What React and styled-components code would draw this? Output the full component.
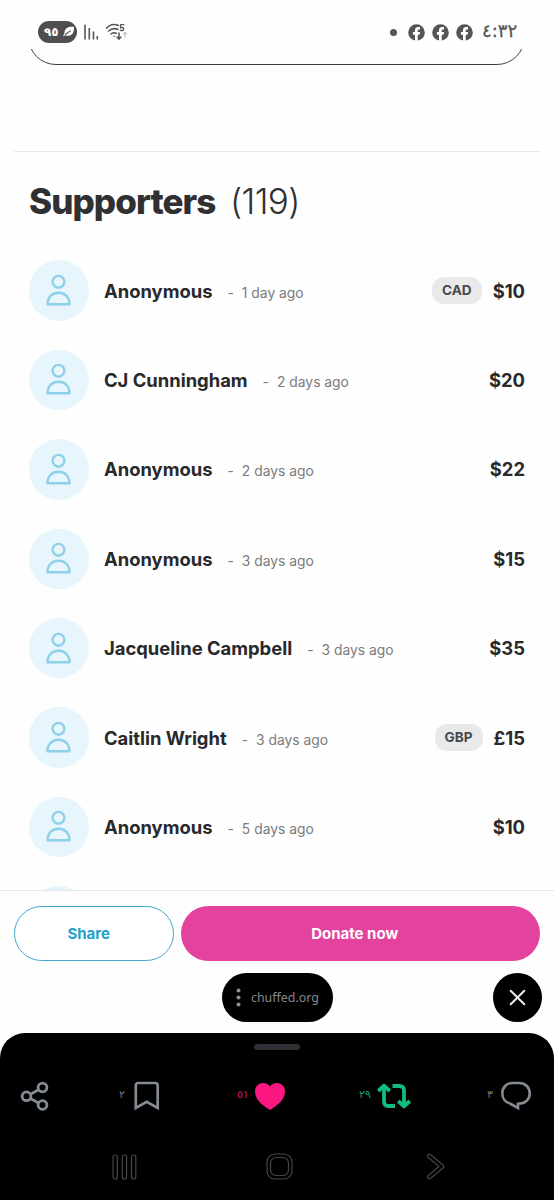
import React from "react";
import styled, { createGlobalStyle } from "styled-components";

const GlobalStyle = createGlobalStyle`
  * { box-sizing: border-box; }
  body {
    margin: 0;
    background: #fefefe;
    font-family: Inter, "Noto Sans", "DejaVu Sans", sans-serif;
    color: #2c2c2e;
  }
  svg { display: block; flex: none; }
`;

const Screen = styled.div`
  width: 554px;
  height: 1200px;
  display: flex;
  flex-direction: column;
  overflow: hidden;
`;

const StatusBar = styled.header`
  height: 49px;
  padding: 15px 37px 0 38px;
  display: flex;
  justify-content: space-between;
  align-items: center;
  flex: none;
`;

const StatusGroup = styled.div`
  display: flex;
  align-items: center;
  gap: ${(p) => p.$gap}px;
`;

const Battery = styled.div`
  width: 39px;
  height: 22px;
  border-radius: 11px;
  background: #4e4e4e;
  color: #fff;
  display: flex;
  align-items: center;
  justify-content: space-between;
  padding: 0 2px 0 6px;
  font: 700 12px/22px "DejaVu Sans", sans-serif;
`;

const Clock = styled.span`
  font: 400 18px/24px "DejaVu Sans", sans-serif;
  color: #555;
  margin-left: 2px;
  width: 35px;
  white-space: nowrap;
  padding-bottom: 3px;
  -webkit-text-stroke: 0.3px #555;
`;

const OutlineClip = styled.div`
  height: 16px;
  margin: 0 29px 0 28px;
  display: flex;
  align-items: flex-end;
  overflow: hidden;
  flex: none;
`;

const Outline = styled.div`
  flex: 1;
  height: 56px;
  flex-shrink: 0;
  border: 1.4px solid #3f3f3f;
  border-radius: 28px;
`;

const Main = styled.main`
  margin: 86px 14px 0;
  border-top: 1px solid #e9e9e9;
  padding: 0 15px;
  height: 739px;
  overflow: hidden;
  flex: none;
`;

const Heading = styled.h1`
  margin: 26px 0 36.4px;
  height: 46px;
  display: flex;
  align-items: center;
  gap: 14.5px;
  font-size: 35px;
  font-weight: 800;
  letter-spacing: -0.95px;
  color: #303033;
`;

const Count = styled.span`
  font-weight: 350;
  font-size: 35px;
  letter-spacing: -0.6px;
`;

const List = styled.ul`
  list-style: none;
  margin: 0;
  padding: 0;
  display: flex;
  flex-direction: column;
  gap: 29px;
`;

const Row = styled.li`
  display: flex;
  align-items: center;
  height: 60.4px;
`;

const Avatar = styled.div`
  width: 60.4px;
  height: 60.4px;
  border-radius: 50%;
  background: #e7f5fc;
  display: flex;
  align-items: center;
  justify-content: center;
  margin-right: 14.6px;
  padding: 0 1px 1px 0;
  flex: none;
`;

const Name = styled.span`
  font-size: 18.4px;
  font-weight: 700;
  color: #29292b;
  white-space: nowrap;
`;

const When = styled.span`
  font-size: 13.85px;
  color: #7b7b7d;
  margin: 4px 0 0 15px;
  white-space: pre;
`;

const Dash = styled.span`
  margin-right: 8px;
`;

const Currency = styled.span`
  margin-left: auto;
  height: 27px;
  padding: 0 10px;
  border-radius: 12px;
  background: #e9e9e9;
  color: #4a4a4c;
  font-size: 13.6px;
  font-weight: 700;
  line-height: 27px;
`;

const Amount = styled.span`
  margin-left: ${(p) => (p.$tagged ? "11px" : "auto")};
  font-size: 18.4px;
  font-weight: 700;
  color: #29292b;
`;

const Actions = styled.div`
  height: 83px;
  flex: none;
  border-top: 1px solid #e6e6e6;
  padding: 15px 14px 13px;
  display: flex;
  gap: 7px;
`;

const Button = styled.button`
  height: 55px;
  width: ${(p) => (p.$primary ? "359px" : "160.5px")};
  border-radius: 28px;
  border: ${(p) => (p.$primary ? "0" : "1.4px solid #45a6ca")};
  background: ${(p) => (p.$primary ? "#e4429f" : "#fff")};
  color: ${(p) => (p.$primary ? "#fff" : "#279fcd")};
  font: 700 15px/1 Inter, sans-serif;
  padding: 0 ${(p) => (p.$primary ? 12 : 11)}px 1px 0;
`;

const BrowserBar = styled.div`
  height: 60px;
  flex: none;
  padding-right: 12px;
  display: grid;
  grid-template-columns: 222px 111px 1fr;
  align-items: start;
`;

const AddressPill = styled.div`
  grid-column: 2;
  height: 49px;
  border-radius: 25px;
  background: #000;
  color: #838990;
  display: flex;
  align-items: center;
  padding-left: 14px;
  gap: 10px;
  font: 400 12.4px/20px "Noto Sans", sans-serif;
`;

const CloseButton = styled.div`
  justify-self: end;
  width: 49px;
  height: 49px;
  border-radius: 50%;
  background: #000;
  display: grid;
  place-items: center;
`;

const Sheet = styled.footer`
  flex: 1;
  border-radius: 25px 25px 0 0;
  background: #000;
  padding: 11px 19px 0;
`;

const Handle = styled.div`
  width: 46px;
  height: 6px;
  border-radius: 3px;
  background: #2e3035;
  margin: 0 auto 30px;
`;

const Reactions = styled.div`
  display: grid;
  grid-template-columns: 100px 118px 122px 128px 1fr;
  align-items: center;
  height: 32px;
`;

const Reaction = styled.div`
  display: flex;
  align-items: center;
  gap: ${(p) => p.$gap || 8}px;
  color: ${(p) => p.$color || "#858b93"};
`;

const ReactionCount = styled.span`
  font: 400 11px/16px "DejaVu Sans", sans-serif;
  opacity: 0.85;
  padding-bottom: 2px;
`;

const SystemNav = styled.nav`
  display: grid;
  grid-template-columns: 154px 160px 19px;
  align-items: center;
  margin-top: 41px;
  padding-left: 93px;
  color: #454545;
`;

const Signal = () => (
  <svg width="15" height="16" viewBox="0 0 15 16" stroke="#555" strokeWidth="1.6">
    <path d="M1 0.8V15.5M5.3 4V15.5M9.5 7.5V15.5M13.3 12V15.5" />
  </svg>
);

const Wifi = () => (
  <svg width="23" height="18" viewBox="1 0 23 18" fill="none" stroke="#555" strokeWidth="1.5" strokeLinecap="round">
    <path d="M1.500 5.200Q6.500-.5 13.500 2.500M3.500 8Q8 4.200 13 6.500M6 11Q9 8.800 11.500 10.300" />
    <circle cx="9.200" cy="13.300" r=".8" fill="#555" stroke="none" />
    <path d="M14 10V16M12 14l2 2.200 2-2.200" />
    <path d="M20 14V9.500M18.600 11l1.400-1.600 1.400 1.600" stroke="#aaa" strokeWidth="1" />
    <path d="M18.800 1.700H15.800L15.500 4.800Q18.800 4 18.800 6Q18.500 8 15.300 7.300" strokeWidth="1.300" />
  </svg>
);

const Leaf = () => (
  <svg width="12" height="12" viewBox="0 0 13 13">
    <path d="M12 1C5 0 1.500 3 1.500 8.200C1 9 .5 9.800.2 11C1 11.300 1.300 10.500 2.200 10C8 12 12 9 12 1Z" fill="#fff" />
    <path d="M2.200 9.500L8.300 5" stroke="#4e4e4e" strokeWidth="1.200" />
  </svg>
);

const Facebook = () => (
  <svg width="17" height="17" viewBox="0 0 17 17">
    <circle cx="8.500" cy="8.500" r="8.300" fill="#555" />
    <path d="M7 17V10.700H4.900V8H7V6.400C7 4 8.400 3 10.300 3H12V5.400H10.900C10 5.400 9.700 5.900 9.700 6.600V8H12L11.600 10.700H9.700V17Z" fill="#fff" />
  </svg>
);

const Person = () => (
  <svg width="25" height="32" viewBox="0 0 25 32" fill="none" stroke="#8fd0e9" strokeWidth="2.400" strokeLinejoin="round">
    <circle cx="12.500" cy="7.800" r="5.900" />
    <path d="M1.500 30.300C1.500 23 6 18.800 12.500 18.800S23.500 23 23.500 30.300Z" />
  </svg>
);

const More = () => (
  <svg width="5" height="19" viewBox="0 0 5 19" fill="#8b9198">
    <circle cx="2.500" cy="2.500" r="2" />
    <circle cx="2.500" cy="9.500" r="2" />
    <circle cx="2.500" cy="16.500" r="2" />
  </svg>
);

const Close = () => (
  <svg width="17" height="17" viewBox="0 0 17 17" stroke="#eee" strokeWidth="2" strokeLinecap="round">
    <path d="M1.700 1.700L15.300 15.300M15.300 1.700L1.700 15.300" />
  </svg>
);

const Share = () => (
  <svg width="32" height="32" viewBox="0 0 32 32" fill="none" stroke="currentColor" strokeWidth="2.800">
    <circle cx="7.500" cy="16.300" r="4.400" />
    <circle cx="23.500" cy="7.500" r="4.400" />
    <circle cx="23.500" cy="25" r="4.400" />
    <path d="M11.400 14.200L19.600 9.700M11.400 18.400L19.600 22.900" />
  </svg>
);

const Bookmark = () => (
  <svg width="26" height="30" viewBox="0 0 26 30" fill="none" stroke="currentColor" strokeWidth="2.700">
    <path d="M1.800 27V4.500Q1.800 2 4.300 2H21.200Q23.700 2 23.700 4.500V27L12.700 20.800Z" />
  </svg>
);

const Heart = () => (
  <svg width="32" height="29" viewBox="0 0 32 29" fill="currentColor">
    <path d="M16 28C10 24.500 1 18 1 9.500C1 4.500 4.500 1 9 1C12 1 14.700 2.200 16 4.500C17.300 2.200 20 1 23 1C27.500 1 31 4.500 31 9.500C31 18 22 24.500 16 28Z" />
  </svg>
);

const Repost = () => (
  <svg width="36" height="26" viewBox="0 0 36 26" fill="none" stroke="currentColor" strokeWidth="3.800" strokeLinejoin="round">
    <path d="M2.200 8L8 2.700L13.800 8M8 3.500V18.500Q8 23 12.500 23H19" />
    <path d="M22.200 18L28 23.300L33.800 18M28 22.500V7.500Q28 3 23.500 3H16.500" />
  </svg>
);

const Comment = () => (
  <svg width="32" height="30" viewBox="0 0 32 30" fill="none" stroke="currentColor" strokeWidth="2.600">
    <path d="M12.500 2H19.500C25.500 2 29.700 6.500 29.700 12.300C29.700 18.500 25.500 22.500 18 22.700V27L10 22.500C5.500 21.500 2.300 17.500 2.300 12.300C2.300 6.500 6.500 2 12.500 2Z" />
  </svg>
);

const Recents = () => (
  <svg width="25" height="26" viewBox="0 0 25 26" fill="none" stroke="currentColor" strokeWidth="1.200">
    <rect x="1" y="1" width="4.300" height="24" rx="2" />
    <rect x="10.300" y="1" width="4.300" height="24" rx="2" />
    <rect x="19.500" y="1" width="4.300" height="24" rx="2" />
  </svg>
);

const Home = () => (
  <svg width="27" height="27" viewBox="0 0 27 27" fill="none" stroke="currentColor" strokeWidth="1.200">
    <rect x="1" y="1" width="25" height="25" rx="8" />
    <rect x="4.500" y="4.500" width="18" height="18" rx="5.500" />
  </svg>
);

const Forward = () => (
  <svg width="19" height="27" viewBox="0 0 19 27" fill="none" stroke="currentColor" strokeWidth="1.200" strokeLinejoin="round">
    <path d="M4.300 1.500L17 12Q18.500 13.500 17 15L4.300 25.500C2.500 26.500.5 24.300 2 22.700L13 13.500L2 4.300C.5 2.700 2.500.5 4.300 1.500Z" />
  </svg>
);

const Dot = styled.i`
  width: 7px;
  height: 7px;
  border-radius: 50%;
  background: #555;
  margin-right: 4px;
`;

const supporters = [
  { name: "Anonymous", when: "1 day ago", amount: "$10", currency: "CAD" },
  { name: "CJ Cunningham", when: "2 days ago", amount: "$20" },
  { name: "Anonymous", when: "2 days ago", amount: "$22" },
  { name: "Anonymous", when: "3 days ago", amount: "$15" },
  { name: "Jacqueline Campbell", when: "3 days ago", amount: "$35" },
  { name: "Caitlin Wright", when: "3 days ago", amount: "£15", currency: "GBP" },
  { name: "Anonymous", when: "5 days ago", amount: "$10" },
];

const Supporter = ({ name, when, amount, currency }) => (
  <Row>
    <Avatar><Person /></Avatar>
    <Name>{name}</Name>
    <When><Dash>-</Dash>{when}</When>
    {currency && <Currency>{currency}</Currency>}
    <Amount $tagged={!!currency}>{amount}</Amount>
  </Row>
);

export default function App() {
  return (
    <Screen>
      <GlobalStyle />
      <StatusBar>
        <StatusGroup $gap={7}>
          <Battery><span>٩٥</span><Leaf /></Battery>
          <Signal />
          <Wifi />
        </StatusGroup>
        <StatusGroup $gap={7}>
          <Dot />
          <Facebook />
          <Facebook />
          <Facebook />
          <Clock>٤:٣٢</Clock>
        </StatusGroup>
      </StatusBar>
      <OutlineClip><Outline /></OutlineClip>
      <Main>
        <Heading>Supporters <Count>(119)</Count></Heading>
        <List>
          {supporters.map((s, i) => <Supporter key={i} {...s} />)}
          <Row><Avatar /></Row>
        </List>
      </Main>
      <Actions>
        <Button>Share</Button>
        <Button $primary>Donate now</Button>
      </Actions>
      <BrowserBar>
        <AddressPill><More />chuffed.org</AddressPill>
        <CloseButton><Close /></CloseButton>
      </BrowserBar>
      <Sheet>
        <Handle />
        <Reactions>
          <Reaction><Share /></Reaction>
          <Reaction $gap={9.5}><ReactionCount>٢</ReactionCount><Bookmark /></Reaction>
          <Reaction $gap={5} $color="#fb1682"><ReactionCount>٥١</ReactionCount><Heart /></Reaction>
          <Reaction $gap={5} $color="#10bd7c"><ReactionCount>٢٩</ReactionCount><Repost /></Reaction>
          <Reaction $gap={7.5}><ReactionCount>٣</ReactionCount><Comment /></Reaction>
        </Reactions>
        <SystemNav><Recents /><Home /><Forward /></SystemNav>
      </Sheet>
    </Screen>
  );
}
